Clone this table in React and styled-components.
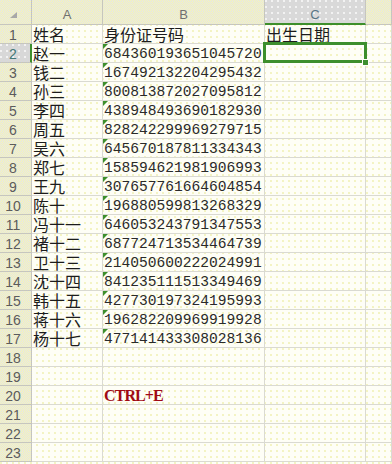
import React from "react";
import styled, { createGlobalStyle, css } from "styled-components";

const GREEN = "#3d8f2c";
const CELL_LINE = "#dadad2";
const HEAD_LINE = "#c6c6be";

const Global = createGlobalStyle`
  html, body { margin: 0; padding: 0; }
  body {
    width: 392px;
    height: 464px;
    overflow: hidden;
    background-color: #fefef6;
    background-image: radial-gradient(circle at 1px 1px, #f3f3c2 0.7px, transparent 1px);
    background-size: 6px 6px;
  }
`;

const Sheet = styled.div`
  display: grid;
  grid-template-columns: 32px 71px 162px 101px minmax(0, 1fr);
  grid-template-rows: 25px;
  grid-auto-rows: 19px;
  width: 392px;
  overflow: hidden;
`;

const headBg = css`
  background-color: #eeeed4;
  background-image: repeating-conic-gradient(#f7f7b4 0 25%, #e3e3ea 0 50%);
  background-size: 2px 2px;
`;

const Corner = styled.div`
  ${headBg};
  border-right: 1px solid ${HEAD_LINE};
  border-bottom: 1px solid ${HEAD_LINE};
  display: flex;
  align-items: flex-end;
  justify-content: center;
  padding: 0 4px 6px 0;
  box-sizing: border-box;
`;

const ColHead = styled.div`
  ${headBg};
  box-sizing: border-box;
  border-right: 1px solid ${HEAD_LINE};
  border-bottom: 1px solid ${HEAD_LINE};
  display: flex;
  align-items: center;
  justify-content: center;
  padding-top: 4px;
  font-family: "Liberation Sans", Arial, sans-serif;
  font-size: 13px;
  color: #707070;
  ${(p) =>
    p.$active &&
    css`
      background: #d9d9d9;
      background-image: radial-gradient(circle at 1px 1px, #f2f2f2 0.8px, transparent 1.1px);
      background-size: 6px 6px;
      border-bottom: 2px solid ${GREEN};
      color: #587585;
      padding-top: 6px;
    `}
`;

const RowHead = styled.div`
  ${headBg};
  box-sizing: border-box;
  border-right: 1px solid ${HEAD_LINE};
  border-bottom: 1px solid ${HEAD_LINE};
  display: flex;
  align-items: center;
  justify-content: center;
  padding: 2px 5px 0 0;
  font-family: "Liberation Sans", Arial, sans-serif;
  font-size: 14px;
  color: #5c5c5c;
  ${(p) =>
    p.$active &&
    css`
      background: #d8d8d8;
      background-image: radial-gradient(circle at 1px 1px, #f2f2f2 0.8px, transparent 1.1px);
      background-size: 6px 6px;
      border-right: 2px solid ${GREEN};
      color: #457878;
      padding-right: 4px;
    `}
`;

const Cell = styled.div`
  position: relative;
  box-sizing: border-box;
  border-right: 1px solid ${CELL_LINE};
  border-bottom: 1px solid ${CELL_LINE};
  display: flex;
  align-items: center;
  padding-left: 1px;
  white-space: nowrap;
  overflow: visible;
  color: #1c1c1c;
  font-family: ${(p) =>
    p.$mono
      ? `"Liberation Mono", "Courier New", monospace`
      : `"Noto Sans CJK SC", "Noto Sans", sans-serif`};
  font-size: ${(p) => (p.$mono ? "14.6px" : "16px")};
  line-height: 18px;
  ${(p) => p.$mono && css`color: #2a2a2a; padding-top: 1px;`}
  ${(p) =>
    p.$flag &&
    css`
      &::before {
        content: "";
        position: absolute;
        left: 0;
        top: 0;
        border-top: 5px solid ${GREEN};
        border-right: 5px solid transparent;
      }
    `}
  ${(p) =>
    p.$selected &&
    css`
      &::after {
        content: "";
        position: absolute;
        left: -2px;
        top: -2px;
        right: -2px;
        bottom: -1px;
        border: 3px solid ${GREEN};
        z-index: 2;
      }
    `}
`;

const Handle = styled.span`
  position: absolute;
  right: -4px;
  bottom: -4px;
  width: 5px;
  height: 5px;
  background: ${GREEN};
  border: 1px solid #fefef6;
  z-index: 3;
`;

const Hotkey = styled.span`
  font-family: "Liberation Serif", "Times New Roman", serif;
  font-weight: bold;
  font-size: 16px;
  letter-spacing: -0.9px;
  color: #a00a14;
  padding-top: 2px;
`;

const people = [
  ["赵一", "684360193651045720"],
  ["钱二", "167492132204295432"],
  ["孙三", "800813872027095812"],
  ["李四", "438948493690182930"],
  ["周五", "828242299969279715"],
  ["吴六", "645670187811334343"],
  ["郑七", "158594621981906993"],
  ["王九", "307657761664604854"],
  ["陈十", "196880599813268329"],
  ["冯十一", "646053243791347553"],
  ["褚十二", "687724713534464739"],
  ["卫十三", "214050600222024991"],
  ["沈十四", "841235111513349469"],
  ["韩十五", "427730197324195993"],
  ["蒋十六", "196282209969919928"],
  ["杨十七", "477141433308028136"],
];

function rowContent(n) {
  if (n === 1) return { a: "姓名", b: "身份证号码", c: "出生日期" };
  if (n >= 2 && n <= 17) {
    const [a, b] = people[n - 2];
    return { a, b, mono: true };
  }
  if (n === 20) return { hotkey: "CTRL+E" };
  return {};
}

export default function App() {
  const rows = Array.from({ length: 23 }, (_, i) => i + 1);
  return (
    <>
      <Global />
      <Sheet>
        <Corner>
          <svg width="7" height="6" viewBox="0 0 7 6">
            <polygon points="7,0 7,6 0,6" fill="#a8a8a8" />
          </svg>
        </Corner>
        <ColHead>A</ColHead>
        <ColHead>B</ColHead>
        <ColHead $active>C</ColHead>
        <ColHead />
        {rows.map((n) => {
          const r = rowContent(n);
          return (
            <React.Fragment key={n}>
              <RowHead $active={n === 2}>{n}</RowHead>
              <Cell>{r.a}</Cell>
              <Cell $mono={r.mono} $flag={r.mono}>
                {r.hotkey ? <Hotkey>{r.hotkey}</Hotkey> : r.b}
              </Cell>
              <Cell $selected={n === 2}>
                {r.c}
                {n === 2 && <Handle />}
              </Cell>
              <Cell />
            </React.Fragment>
          );
        })}
      </Sheet>
    </>
  );
}
